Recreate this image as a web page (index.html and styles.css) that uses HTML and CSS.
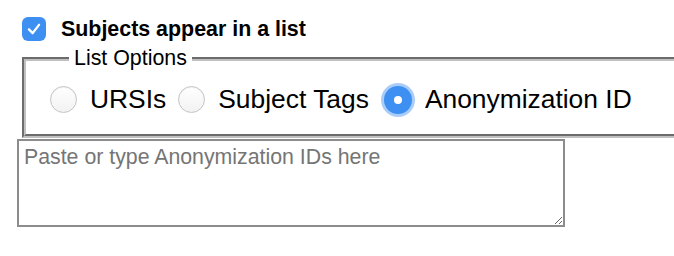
FILE: index.html
```html
<!DOCTYPE html>
<html>
<head>
<meta charset="utf-8">
<link rel="stylesheet" href="styles.css">
</head>
<body>
<div class="page">
  <label class="check-row">
    <span class="checkbox" role="checkbox" aria-checked="true">
      <svg viewBox="0 0 24 24" width="24" height="24"><path d="M6.5 12.5 L10.5 16.5 L17.5 7.5" fill="none" stroke="#fff" stroke-width="2.6" stroke-linecap="round" stroke-linejoin="round"/></svg>
    </span>
    <span class="check-label">Subjects appear in a list</span>
  </label>
  <fieldset class="options">
    <legend class="legend">List Options</legend>
    <div class="radio-row">
      <label class="option"><span class="radio"></span><span class="opt-text">URSIs</span></label>
      <label class="option"><span class="radio"></span><span class="opt-text">Subject Tags</span></label>
      <label class="option"><span class="radio radio-on"><span class="dot"></span></span><span class="opt-text">Anonymization ID</span></label>
    </div>
  </fieldset>
  <textarea class="ids" placeholder="Paste or type Anonymization IDs here"></textarea>
</div>
</body>
</html>
```

FILE: styles.css
```css
html, body {
  margin: 0;
  padding: 0;
  background: #fff;
  overflow: hidden;
}
body {
  font-family: "Liberation Sans", Arial, Helvetica, sans-serif;
  color: #000;
}
.page {
  padding: 17px 0 0 17px;
}
.check-row {
  display: flex;
  align-items: center;
  gap: 15px;
  padding-left: 5px;
  height: 24px;
}
.checkbox {
  width: 24px;
  height: 24px;
  border-radius: 6px;
  background: #3d8ff2;
  display: flex;
  align-items: center;
  justify-content: center;
}
.checkbox svg {
  width: 22px;
  height: 22px;
}
.check-label {
  font-weight: bold;
  font-size: 21.4px;
}
.options {
  margin: 5px 0 0 5px;
  width: 700px;
  border: 4px groove rgb(192, 192, 192);
  padding: 13px 20px 19px 24px;
  box-sizing: border-box;
}
.legend {
  font-size: 21.4px;
  padding: 0 5px;
  margin-left: 19px;
}
.radio-row {
  display: flex;
  align-items: center;
  gap: 12px;
}
.option {
  display: flex;
  align-items: center;
  gap: 13px;
  font-size: 26.4px;
}
.radio {
  width: 27px;
  height: 27px;
  border-radius: 50%;
  box-sizing: border-box;
  border: 1px solid #c4c4c4;
  background: linear-gradient(#ffffff, #f2f2f2);
  box-shadow: inset 0 1px 1px rgba(0,0,0,0.06);
  display: flex;
  align-items: center;
  justify-content: center;
}
.radio-on {
  border: none;
  background: #3d8ff2;
  box-shadow: 0 0 0 3px #a9cdf8;
  width: 28px;
  height: 28px;
  margin-left: 3px;
}
.dot {
  width: 8px;
  height: 8px;
  border-radius: 50%;
  background: #fff;
}
.ids {
  display: block;
  margin: 1px 0 0 0;
  width: 548px;
  height: 88px;
  box-sizing: border-box;
  border: 2px solid #8c8c8c;
  padding: 4px 5px;
  font-family: "Liberation Sans", Arial, Helvetica, sans-serif;
  font-size: 21.3px;
  resize: both;
  outline: none;
}
.ids::placeholder {
  color: #757575;
}
```
